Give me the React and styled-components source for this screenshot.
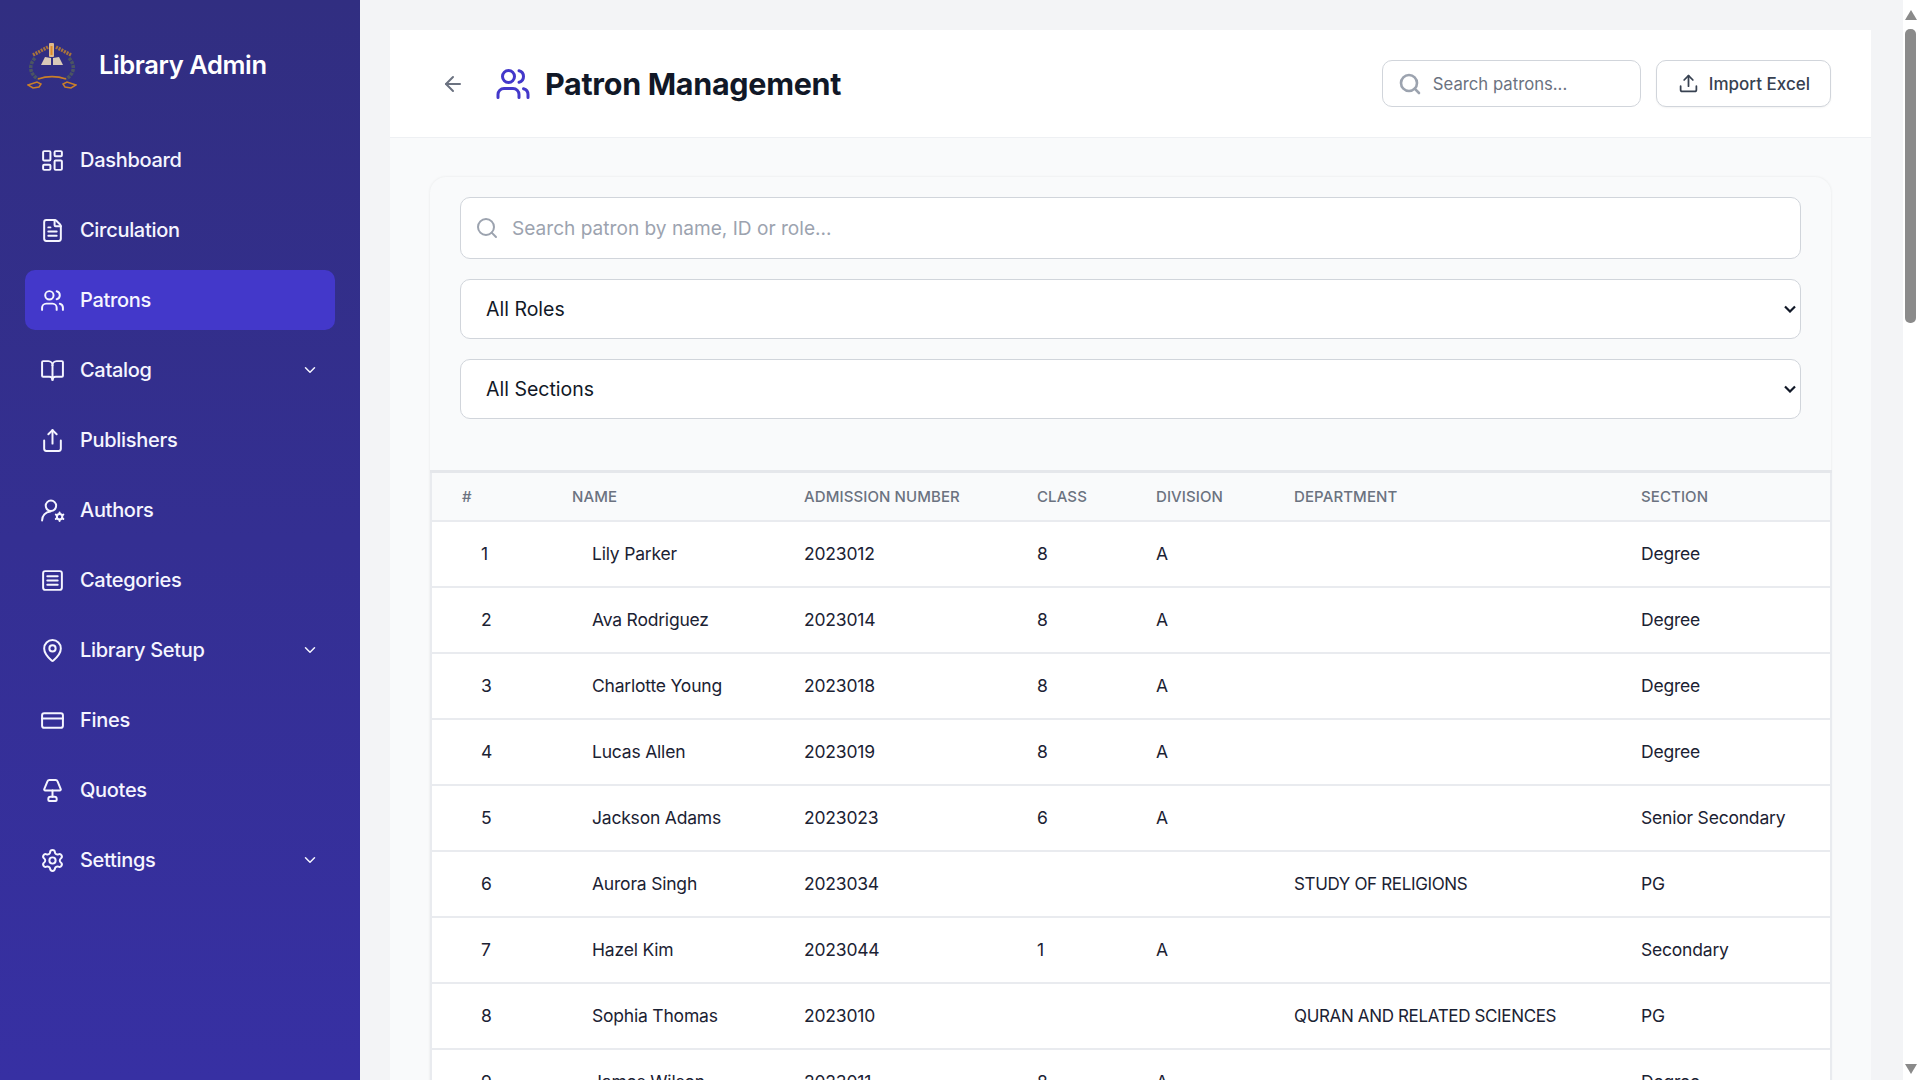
import styled, { createGlobalStyle } from 'styled-components';
import {
  LayoutDashboard, FileText, Users, BookOpen, Share, MapPin, CreditCard, Lamp, Settings,
  ChevronDown, ArrowLeft, Search, Upload,
} from 'lucide-react';

const GlobalStyle = createGlobalStyle`
  * { box-sizing: border-box; }
  html, body { margin: 0; height: 100%; overflow: hidden; }
  body { font-family: 'Inter', 'Noto Sans', sans-serif; background: #f3f4f6; color: #111827; }
`;

const Shell = styled.div`
  display: flex;
  height: 100vh;
  overflow: hidden;
`;

const Sidebar = styled.aside`
  width: 360px;
  flex: none;
  background: linear-gradient(180deg, #312e81, #3730a3);
  padding: 0 25px;
  color: #fff;
`;

const Brand = styled.div`
  display: flex;
  align-items: center;
  gap: 22px;
  height: 130px;
  padding: 0 0 1px 2px;
`;

const BrandTitle = styled.div`
  font-size: 25.5px;
  font-weight: 600;
  letter-spacing: -0.4px;
`;

const Nav = styled.nav`
  display: flex;
  flex-direction: column;
  gap: 10px;
`;

const NavItem = styled.div`
  display: flex;
  align-items: center;
  height: 60px;
  padding: 0 16px 0 15px;
  gap: 15px;
  border-radius: 10px;
  background: ${({ $active }) => ($active ? '#4338ca' : 'transparent')};
  font-size: 20px;
  font-weight: 500;
  letter-spacing: -0.3px;
  color: #f5f5ff;
`;

const NavLabel = styled.span`
  flex: 1;
`;

const Main = styled.main`
  flex: 1;
  min-width: 0;
  padding: 30px 32px 0 30px;
  overflow: hidden;
`;

const Page = styled.div`
  background: #f9fafb;
  min-height: 100%;
`;

const Header = styled.header`
  display: flex;
  align-items: center;
  height: 108px;
  padding: 0 40px;
  background: #fff;
  border-bottom: 1px solid #eef0f3;
`;

const BackButton = styled.div`
  display: flex;
  color: #6b7280;
  margin: 0 30px 0 11px;
`;

const TitleIcon = styled.div`
  display: flex;
  color: #4338ca;
  margin-right: 14px;
`;

const Title = styled.h1`
  flex: 1;
  margin: 0;
  font-size: 30.5px;
  font-weight: 700;
  letter-spacing: -0.3px;
  color: #111827;
`;

const HeaderSearch = styled.div`
  display: flex;
  align-items: center;
  gap: 9px;
  width: 259px;
  height: 47px;
  padding: 0 15px;
  background: #fff;
  border: 1px solid #d1d5db;
  border-radius: 10px;
  color: #9ca3af;
`;

const HeaderInput = styled.input`
  flex: 1;
  min-width: 0;
  border: 0;
  outline: 0;
  background: transparent;
  font: 400 16.7px 'Inter', sans-serif;
  color: #374151;
  &::placeholder { color: #6b7280; opacity: 1; }
`;

const ImportButton = styled.button`
  display: flex;
  align-items: center;
  gap: 10px;
  height: 47px;
  margin-left: 15px;
  padding: 0 20px 0 21px;
  background: #fff;
  border: 1px solid #d1d5db;
  border-radius: 10px;
  box-shadow: 0 1px 2px rgba(0, 0, 0, 0.05);
  font: 500 17px 'Inter', sans-serif;
  color: #374151;
`;

const Content = styled.div`
  padding: 39px 40px 0;
`;

const Card = styled.section`
  background: #f9fafb;
  border-radius: 16px 16px 0 0;
  box-shadow: 0 0 3px rgba(0, 0, 0, 0.08);
`;

const Filters = styled.div`
  display: flex;
  flex-direction: column;
  gap: 20px;
  padding: 20px 30px 51px;
`;

const SearchField = styled.div`
  display: flex;
  align-items: center;
  gap: 11px;
  height: 62px;
  padding: 0 14px;
  background: #fff;
  border: 1px solid #d1d5db;
  border-radius: 10px;
  color: #9ca3af;
`;

const SearchInput = styled.input`
  flex: 1;
  border: 0;
  outline: 0;
  background: transparent;
  font: 400 19.1px 'Inter', sans-serif;
  &::placeholder { color: #9ca3af; opacity: 1; }
`;

const Select = styled.select`
  appearance: none;
  height: 60px;
  padding: 0 21px 0 25px;
  background: #fff url("data:image/svg+xml,%3Csvg xmlns='http://www.w3.org/2000/svg' width='12' height='8' viewBox='0 0 12 8' fill='none' stroke='%23111827' stroke-width='2.2'%3E%3Cpath d='M1 1.5l5 5 5-5'/%3E%3C/svg%3E") no-repeat right 4px center;
  border: 1px solid #d1d5db;
  border-radius: 10px;
  font: 400 19.5px 'Inter', sans-serif;
  color: #111827;
  outline: 0;
`;

const Table = styled.table`
  width: 100%;
  table-layout: fixed;
  border-collapse: collapse;
  background: #fff;
  border: 2px solid #e9ebef;
  border-top: 3px solid #e5e7eb;
`;

const HeadCell = styled.th`
  height: 49px;
  padding: 0 0 0 30px;
  background: #f9fafb;
  border-bottom: 2px solid #e9ebef;
  text-align: left;
  font-size: 15px;
  font-weight: 500;
  letter-spacing: 0.1px;
  color: #6b7280;
`;

const Cell = styled.td`
  height: 66px;
  padding: 0 0 0 ${({ $inset }) => $inset || 30}px;
  border-bottom: 2px solid #e9ebef;
  font-size: ${({ $caps }) => ($caps ? '17px' : '17.5px')};
  font-weight: 400;
  letter-spacing: ${({ $caps }) => ($caps ? '-0.35px' : '-0.2px')};
  color: #1b2233;
`;

const ScrollBar = styled.div`
  width: 17px;
  flex: none;
  display: flex;
  flex-direction: column;
  align-items: center;
  background: #fff;
  padding: 10px 2px 6px 0;
`;

const ScrollArrow = styled.div`
  width: 0;
  height: 0;
  border-left: 6px solid transparent;
  border-right: 6px solid transparent;
  ${({ $down }) => ($down ? 'border-top' : 'border-bottom')}: 10px solid #8a8a8a;
`;

const ScrollTrack = styled.div`
  flex: 1;
  width: 100%;
  padding: 9px 0;
`;

const ScrollThumb = styled.div`
  width: 11px;
  height: 294px;
  margin: 0 auto;
  border-radius: 5px;
  background: #8b8b8b;
`;

const ICON_PROPS = { size: 25, strokeWidth: 1.9 };

const ListIcon = () => (
  <svg width="25" height="25" viewBox="0 0 24 24" fill="none" stroke="currentColor" strokeWidth="1.9" strokeLinecap="round">
    <rect x="3" y="3" width="18" height="18" rx="2" />
    <path d="M7 8h10M7 12h10M7 16h10" />
  </svg>
);

const AuthorIcon = () => (
  <svg width="25" height="25" viewBox="0 0 24 24" fill="none" stroke="currentColor" strokeWidth="1.9" strokeLinecap="round">
    <circle cx="10.5" cy="7.5" r="5" />
    <path d="M2 21.5c0-4.5 3.2-8 8-8.5" />
    <circle cx="18.8" cy="18" r="2.6" />
    <path d="M18.8 13.8v1.4M18.8 20.8v1.4M15.2 15.9l1.2.7M21.2 19.4l1.2.7M15.2 20.1l1.2-.7M21.2 16.6l1.2-.7" />
  </svg>
);

const LogoMark = () => (
  <svg width="50" height="50" viewBox="0 0 50 50" fill="none">
    <path d="M8 18C1 26 3 34 11 39" stroke="#4b5563" strokeWidth="3.5" strokeDasharray="3 1" />
    <path d="M42 18c7 8 5 16-3 21" stroke="#4b5563" strokeWidth="3.5" strokeDasharray="3 1" />
    <path d="M6 15l15-8M44 15L29 7" stroke="#a9743c" strokeWidth="3.5" strokeDasharray="2 1" />
    <rect x="22" y="3" width="5" height="14" rx="1" fill="#dfb98a" />
    <rect x="23.5" y="6" width="2" height="9" fill="#e08a2a" />
    <path d="M14 25l4-8 6 1v7zM36 25l-4-8-6 1v7z" fill="#d9c9b8" />
    <path d="M11 39c9-3 19-3 28 0" stroke="#c97f2a" strokeWidth="1.8" />
    <path d="M1 45l9-3 4 2-2 3-6 1zM49 45l-9-3-4 2 2 3 6 1z" stroke="#c97f2a" strokeWidth="1.5" />
  </svg>
);

const NAV_ITEMS = [
  { label: 'Dashboard', icon: <LayoutDashboard {...ICON_PROPS} /> },
  { label: 'Circulation', icon: <FileText {...ICON_PROPS} /> },
  { label: 'Patrons', icon: <Users {...ICON_PROPS} />, active: true },
  { label: 'Catalog', icon: <BookOpen {...ICON_PROPS} />, more: true },
  { label: 'Publishers', icon: <Share {...ICON_PROPS} /> },
  { label: 'Authors', icon: <AuthorIcon /> },
  { label: 'Categories', icon: <ListIcon /> },
  { label: 'Library Setup', icon: <MapPin {...ICON_PROPS} />, more: true },
  { label: 'Fines', icon: <CreditCard {...ICON_PROPS} /> },
  { label: 'Quotes', icon: <Lamp {...ICON_PROPS} /> },
  { label: 'Settings', icon: <Settings {...ICON_PROPS} />, more: true },
];

const COLUMNS = [
  ['#', 111], ['Name', 232], ['Admission Number', 233], ['Class', 119],
  ['Division', 138], ['Department', 347], ['Section', 220],
];

const PATRONS = [
  ['Lily Parker', '2023012', '8', 'A', '', 'Degree'],
  ['Ava Rodriguez', '2023014', '8', 'A', '', 'Degree'],
  ['Charlotte Young', '2023018', '8', 'A', '', 'Degree'],
  ['Lucas Allen', '2023019', '8', 'A', '', 'Degree'],
  ['Jackson Adams', '2023023', '6', 'A', '', 'Senior Secondary'],
  ['Aurora Singh', '2023034', '', '', 'STUDY OF RELIGIONS', 'PG'],
  ['Hazel Kim', '2023044', '1', 'A', '', 'Secondary'],
  ['Sophia Thomas', '2023010', '', '', 'QURAN AND RELATED SCIENCES', 'PG'],
  ['James Wilson', '2023011', '8', 'A', '', 'Degree'],
];

const App = () => (
  <Shell>
    <GlobalStyle />
    <Sidebar>
      <Brand>
        <LogoMark />
        <BrandTitle>Library Admin</BrandTitle>
      </Brand>
      <Nav>
        {NAV_ITEMS.map((item) => (
          <NavItem key={item.label} $active={item.active}>
            {item.icon}
            <NavLabel>{item.label}</NavLabel>
            {item.more && <ChevronDown size={18} strokeWidth={2} />}
          </NavItem>
        ))}
      </Nav>
    </Sidebar>

    <Main>
      <Page>
        <Header>
          <BackButton><ArrowLeft size={24} strokeWidth={2} /></BackButton>
          <TitleIcon><Users size={36} strokeWidth={2} /></TitleIcon>
          <Title>Patron Management</Title>
          <HeaderSearch>
            <Search size={24} strokeWidth={2.6} />
            <HeaderInput placeholder="Search patrons..." />
          </HeaderSearch>
          <ImportButton>
            <Upload size={21} strokeWidth={2} />
            Import Excel
          </ImportButton>
        </Header>
        <Content>
          <Card>
            <Filters>
              <SearchField>
                <Search size={24} strokeWidth={2} />
                <SearchInput placeholder="Search patron by name, ID or role..." />
              </SearchField>
              <Select defaultValue="all"><option value="all">All Roles</option></Select>
              <Select defaultValue="all"><option value="all">All Sections</option></Select>
            </Filters>
            <Table>
              <colgroup>
                {COLUMNS.map(([name, width]) => <col key={name} width={width} />)}
              </colgroup>
              <thead>
                <tr>
                  {COLUMNS.map(([name]) => <HeadCell key={name}>{name.toUpperCase()}</HeadCell>)}
                </tr>
              </thead>
              <tbody>
                {PATRONS.map(([name, admission, cls, division, department, section], i) => (
                  <tr key={admission}>
                    <Cell $inset={49}>{i + 1}</Cell>
                    <Cell $inset={50}>{name}</Cell>
                    <Cell>{admission}</Cell>
                    <Cell>{cls}</Cell>
                    <Cell>{division}</Cell>
                    <Cell $caps>{department}</Cell>
                    <Cell>{section}</Cell>
                  </tr>
                ))}
              </tbody>
            </Table>
          </Card>
        </Content>
      </Page>
    </Main>

    <ScrollBar>
      <ScrollArrow />
      <ScrollTrack><ScrollThumb /></ScrollTrack>
      <ScrollArrow $down />
    </ScrollBar>
  </Shell>
);

export default App;
